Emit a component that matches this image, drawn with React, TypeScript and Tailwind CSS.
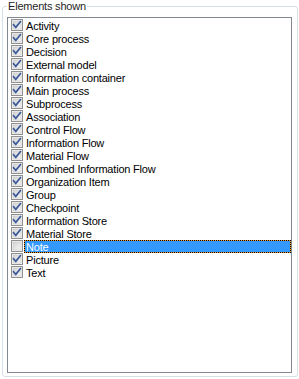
const items = [
  'Activity',
  'Core process',
  'Decision',
  'External model',
  'Information container',
  'Main process',
  'Subprocess',
  'Association',
  'Control Flow',
  'Information Flow',
  'Material Flow',
  'Combined Information Flow',
  'Organization Item',
  'Group',
  'Checkpoint',
  'Information Store',
  'Material Store',
  'Note',
  'Picture',
  'Text',
]

function CheckBox({ checked }: { checked: boolean }) {
  return (
    <svg width="12" height="12" viewBox="0 0 12 12" className="shrink-0">
      <defs>
        <linearGradient id="cbFill" x1="0" y1="0" x2="1" y2="1">
          <stop offset="0" stopColor="#d2d2d2" />
          <stop offset="1" stopColor="#f7f7f7" />
        </linearGradient>
      </defs>
      <rect x="0.5" y="0.5" width="11" height="11" fill="#f4f4f4" stroke="#8f8f8f" />
      <rect x="2" y="2" width="8" height="8" fill="url(#cbFill)" stroke="#c9c9c9" strokeWidth="0.6" />
      {checked && (
        <path d="M2.6 5.8 L4.8 8.4 L9.4 2.6" fill="none" stroke="#3c5a9a" strokeWidth="1.7" strokeLinecap="square" />
      )}
    </svg>
  )
}

export default function App() {
  return (
    <div className="w-[299px] h-[379px] bg-white pt-[6px] pl-[2px] font-['Liberation_Sans',Arial,sans-serif] text-[11px] tracking-[-0.2px] text-black">
      <div className="relative w-[296px] h-[371px] border border-[#d5dfe5] rounded-[3px] pt-[10px] pl-[4px]">
        {/* group caption */}
        <span className="absolute left-[4px] top-[-7px] bg-white px-[1px] leading-[13px] text-[#1e1e1e]">
          Elements shown
        </span>

        <div className="w-[285px] h-[356px] border border-[#828790] bg-white pt-[1px]">
          {items.map((name) => {
            const isNote = name === 'Note'
            return (
              <div key={name} className="flex h-[13px] items-start pl-[3px]">
                <CheckBox checked={!isNote} />
                {isNote ? (
                  <div className="ml-[1px] flex-1 h-[13px] bg-[#f09a2a]">
                    <div className="h-[13px] border border-dotted border-black bg-[#3399ff] bg-clip-padding pl-[1px] leading-[12px] text-white">
                      {name}
                    </div>
                  </div>
                ) : (
                  <span className="ml-[3px] mt-[1px] leading-[13px] whitespace-nowrap">{name}</span>
                )}
              </div>
            )
          })}
        </div>
      </div>
    </div>
  )
}
